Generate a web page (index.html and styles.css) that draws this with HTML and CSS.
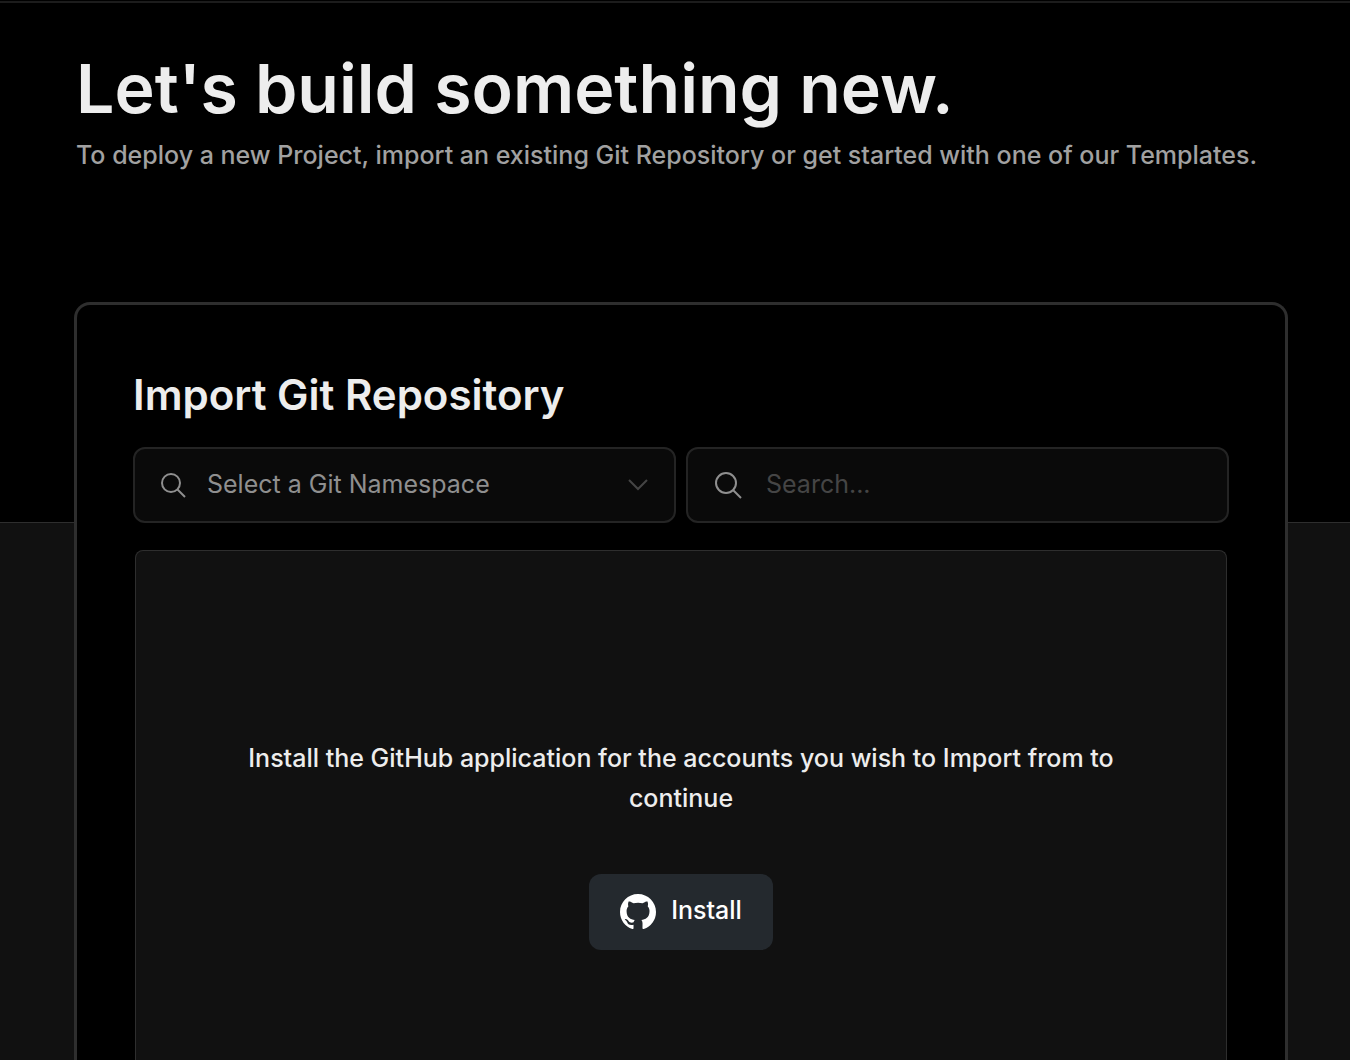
FILE: index.html
```html
<!DOCTYPE html>
<html lang="en">
<head>
<meta charset="utf-8">
<title>New Project</title>
<link rel="stylesheet" href="styles.css">
</head>
<body>
<header class="intro">
  <h1 class="intro-title">Let's build something new.</h1>
  <p class="intro-text">To deploy a new Project, import an existing Git Repository or get started with one of our Templates.</p>
</header>
<main class="stage">
  <section class="card">
    <h2 class="card-title">Import Git Repository</h2>
    <div class="filters">
      <div class="field">
        <svg class="search-icon" viewBox="0 0 28 28" aria-hidden="true"><circle cx="12" cy="12" r="9"/><path d="M18.5 18.5 26 26"/></svg>
        <select class="control" aria-label="Git Namespace"><option>Select a Git Namespace</option></select>
        <svg class="chevron" viewBox="0 0 20 12" aria-hidden="true"><path d="m1 1 9 9 9-9"/></svg>
      </div>
      <div class="field field-search">
        <svg class="search-icon" viewBox="0 0 28 28" aria-hidden="true"><circle cx="12" cy="12" r="10"/><path d="M19 19 27 27"/></svg>
        <input class="control" type="search" aria-label="Search repositories" placeholder="Search...">
      </div>
    </div>
    <div class="empty">
      <p class="empty-text">Install the GitHub application for the accounts you wish to Import from to continue</p>
      <button class="install" type="button">
        <svg class="github" viewBox="0 0 16 16" aria-hidden="true"><path d="M8 0C3.58 0 0 3.58 0 8c0 3.54 2.29 6.53 5.47 7.59.4.07.55-.17.55-.38 0-.19-.01-.82-.01-1.49-2.01.37-2.53-.49-2.69-.94-.09-.23-.48-.94-.82-1.13-.28-.15-.68-.52-.01-.53.63-.01 1.08.58 1.23.82.72 1.21 1.87.87 2.33.66.07-.52.28-.87.51-1.07-1.78-.2-3.64-.89-3.64-3.95 0-.87.31-1.59.82-2.15-.08-.2-.36-1.02.08-2.12 0 0 .67-.21 2.2.82.64-.18 1.32-.27 2-.27s1.36.09 2 .27c1.53-1.04 2.2-.82 2.2-.82.44 1.1.16 1.92.08 2.12.51.56.82 1.27.82 2.15 0 3.07-1.87 3.75-3.65 3.95.29.25.54.73.54 1.48 0 1.07-.01 1.93-.01 2.2 0 .21.15.46.55.38A8.01 8.01 0 0 0 16 8c0-4.42-3.58-8-8-8Z"/></svg>
        <span class="install-label">Install</span>
      </button>
    </div>
  </section>
</main>
</body>
</html>
```
FILE: styles.css
```css
* { box-sizing: border-box; }

body {
  margin: 0;
  min-height: 100vh;
  display: flex;
  flex-direction: column;
  background: linear-gradient(#000 1px, #1c1c1c 1px, #1c1c1c 3px, #000 3px);
  color: #ededed;
  font-family: Inter, "Liberation Sans", sans-serif;
}

h1, h2, p { margin: 0; }

.intro { padding: 46px 76px 0; }
.intro-title { font-size: 68px; line-height: 84px; font-weight: 600; }
.intro-text { margin-top: 5px; font-size: 25px; line-height: 40px; font-weight: 450; color: #a1a1a1; }

.stage {
  flex: 1;
  display: flex;
  margin-top: 127px;
  padding: 0 62px 0 74px;
  background: linear-gradient(transparent 220px, #2e2e2e 220px, #2e2e2e 221px, #111 221px);
}

.card {
  flex: 1;
  display: flex;
  flex-direction: column;
  padding: 60px 56px 0;
  background: #000;
  border: 3px solid #2e2e2e;
  border-bottom: 0;
  border-radius: 16px 16px 0 0;
}

.card-title { font-size: 42px; line-height: 60px; font-weight: 600; }

.filters { display: grid; grid-template-columns: 1fr 1fr; gap: 10px; margin-top: 22px; }

.field {
  display: flex;
  align-items: center;
  gap: 20px;
  height: 76px;
  padding: 0 26px 0 24px;
  background: #0a0a0a;
  border: 2px solid #242424;
  border-radius: 12px;
}
.field-search { gap: 24px; padding-left: 26px; }

.control {
  flex: 1;
  min-width: 0;
  height: 40px;
  padding: 0 0 2px;
  border: 0;
  outline: 0;
  appearance: none;
  background: transparent;
  color: #8f8f8f;
  font: inherit;
  font-size: 25px;
}
.control::placeholder { color: #454545; opacity: 1; }

.search-icon { width: 28px; height: 28px; fill: none; stroke: #8f8f8f; stroke-width: 2; }
.chevron { width: 20px; height: 12px; fill: none; stroke: #454545; stroke-width: 2; }

.empty {
  flex: 1;
  display: flex;
  flex-direction: column;
  align-items: center;
  gap: 56px;
  margin: 27px 2px 0;
  padding: 187px 100px 110px;
  background: #111;
  border: 1px solid #2e2e2e;
  border-bottom: 0;
  border-radius: 8px 8px 0 0;
}
.empty-text { font-size: 25px; line-height: 40px; font-weight: 500; text-align: center; }

.install {
  display: flex;
  align-items: center;
  gap: 15px;
  height: 76px;
  padding: 0 31px;
  border: 0;
  border-radius: 12px;
  background: #24292e;
  color: #fff;
  font: inherit;
  font-size: 25px;
  font-weight: 500;
}
.install-label { padding-bottom: 4px; }
.github { width: 36px; height: 36px; fill: #fff; }
```
